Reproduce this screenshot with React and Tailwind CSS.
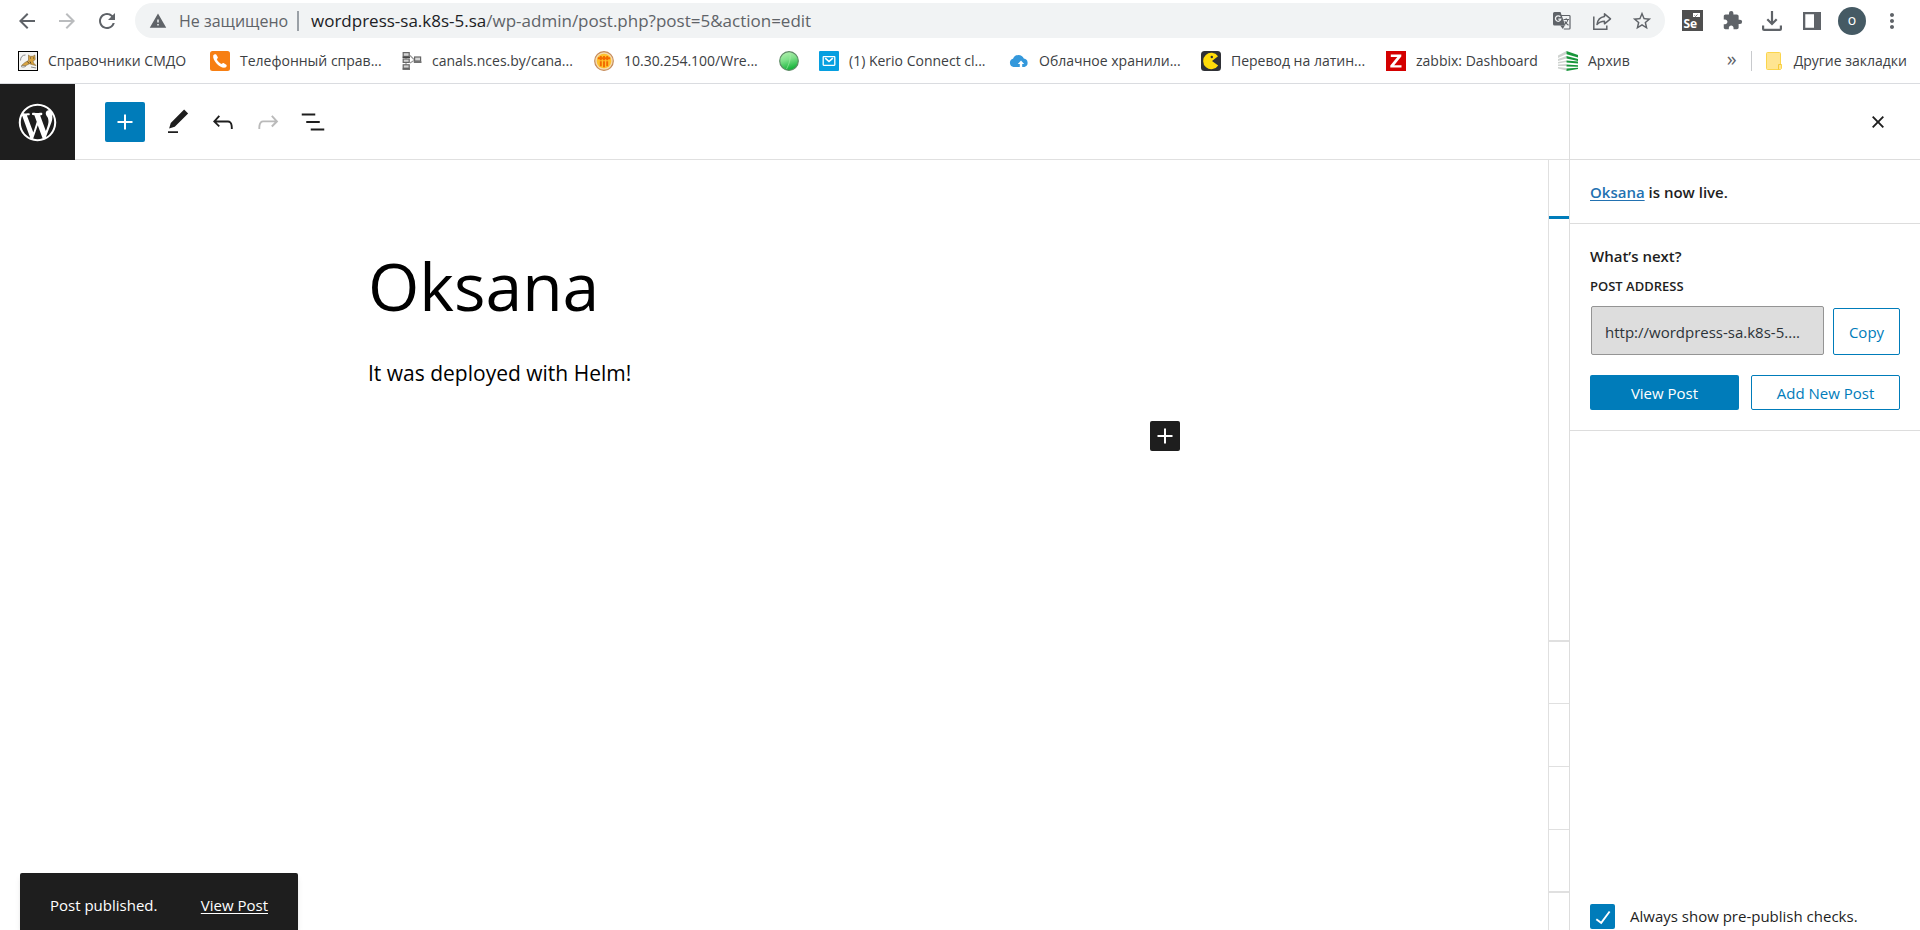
import React from "react";
import { MdArrowBack, MdArrowForward, MdRefresh, MdWarning, MdStarBorder, MdExtension, MdMoreVert } from "react-icons/md";

/* ---------- browser icons ---------- */

function TranslateIcon() {
  return (
    <svg width="20" height="20" viewBox="0 0 20 20" aria-hidden="true">
      <path d="M9 4.500h8.200c.5 0 .8.300.8.800v11.900c0 .5-.3.800-.8.800h-5.400" fill="none" stroke="#5f6368" strokeWidth="1.200" />
      <path d="M2.500 1h6l4.800 13.500H2.500A1.500 1.500 0 0 1 1 13V2.500A1.500 1.500 0 0 1 2.500 1z" fill="#5f6368" />
      <path d="M8.200 14.500h4.600L10.800 18z" fill="#5f6368" />
      <path d="M8.300 5.900A2.700 2.700 0 1 0 8.800 8.200H6.300" fill="none" stroke="#f1f3f4" strokeWidth="1.300" />
      <path d="M11.500 8.500h5.500M14.200 7.200v1.300M16 8.500c-.4 2-1.600 3.600-3.200 4.700M12.800 10.300c.8 1.500 2 2.700 3.700 3.900" fill="none" stroke="#5f6368" strokeWidth="1.100" />
    </svg>
  );
}

function ShareIcon() {
  return (
    <svg width="20" height="20" viewBox="0 0 20 20" fill="none" stroke="#5f6368" strokeWidth="1.500" aria-hidden="true">
      <path d="M1.800 5.500v12.700h13V14.500" />
      <path d="M12.500 2.800l6 5-6 5V10.200c-3.600 0-5.600 1-7.500 3.300.6-4.200 3-7.300 7.500-7.900z" strokeLinejoin="round" />
    </svg>
  );
}

function SeleniumIcon() {
  return (
    <svg width="21" height="21" viewBox="0 0 21 21" aria-hidden="true">
      <rect width="21" height="21" fill="#4f4f4f" />
      <path d="M11 3h7v4h-7z" fill="#fff" />
      <path d="M12.500 5.500l1 1 2-2" stroke="#777" fill="none" />
      <text x="1.500" y="18" fill="#fff" fontSize="12" fontWeight="700" fontFamily="Open Sans, sans-serif">Se</text>
    </svg>
  );
}

function DownloadIcon() {
  return (
    <svg width="20" height="20" viewBox="0 0 20 20" fill="none" stroke="#5f6368" strokeWidth="2.200" aria-hidden="true">
      <path d="M10 0v13M5.300 8.300L10 13l4.700-4.700M1.100 14.500v3.400c0 .6.400 1 1 1h15.800c.6 0 1-.4 1-1v-3.400" />
    </svg>
  );
}

function SidePanelIcon() {
  return (
    <svg width="18" height="18" viewBox="0 0 18 18" aria-hidden="true">
      <path d="M0 0h18v18H0zM2.300 2.300v13.400h8.700V2.300z" fill="#5f6368" fillRule="evenodd" />
    </svg>
  );
}

/* ---------- bookmark icons ---------- */

const fav = {
  cat: (
    <svg width="20" height="20" viewBox="0 0 20 20">
      <rect x=".5" y=".5" width="19" height="19" fill="#f4f4f2" stroke="#000" />
      <path d="M10.500 4l1.500 1.300h3L16.800 4l.4 4.500-2.200 1.800.5 1.700 2.500 2.500-3.500-.8-3-1-3.500 1.800H3.500L7 11.500l3.500-2z" fill="#d9a441" stroke="#7a6233" strokeWidth=".6" />
      <path d="M2.500 9.500c0-3.500 2-5.500 5-5.500M3 15.500c2 1 4 .5 5-.5M13 16l5 1" stroke="#8b8b8b" fill="none" />
      <path d="M12 7h1M15 7h1M9.500 10.500l1.500 2M12 10.500l1 2" stroke="#333" strokeWidth=".8" />
    </svg>
  ),
  phone: (
    <svg width="20" height="20" viewBox="0 0 20 20">
      <rect width="20" height="20" rx="2.500" fill="#f77f13" />
      <path d="M3.200 4.500C4 3.300 5.600 2.700 6.200 3.600l1.500 2.500c.4.7.1 1.400-.9 2.200.7 2 2.800 4 4.900 4.800.8-1 1.500-1.300 2.200-.9l2.400 1.500c.9.7.3 2.100-.9 2.900C10.500 18 2.300 9.800 3.200 4.500z" fill="#fff" />
    </svg>
  ),
  diagram: (
    <svg width="20" height="20" viewBox="0 0 20 20" fill="#d4d4d4" stroke="#666" strokeWidth="1.200">
      <path d="M4 6v9M8 4.500l4 4M8 12l4-2.500" fill="none" stroke="#999" />
      <rect x="1.200" y="1.600" width="6" height="3.800" /><rect x="1.200" y="8" width="6" height="3.400" />
      <rect x="1.200" y="13.800" width="6" height="3.400" /><rect x="12.600" y="6" width="6" height="4" />
      <path d="M.5 6.400h7.500M.5 18.200h7.500M11.800 11.200h7.700" stroke="#444" />
    </svg>
  ),
  basket: (
    <svg width="20" height="20" viewBox="0 0 20 20">
      <circle cx="10" cy="10" r="9.300" fill="#f6dcae" stroke="#c58a5a" strokeWidth="1.200" />
      <circle cx="10" cy="10" r="7.300" fill="#ffc12c" />
      <path d="M3.800 7.200h12.400M6.800 5v4.200M10 5v4.200M13.200 5v4.200M6.800 10.200v5M10 10.200v6M13.200 10.200v5" stroke="#f26a00" strokeWidth="1.900" />
    </svg>
  ),
  green: (
    <svg width="20" height="20" viewBox="0 0 20 20">
      <defs>
        <linearGradient id="ball" x1="0" y1="0" x2=".3" y2="1">
          <stop offset="0" stopColor="#b9f3b4" /><stop offset=".5" stopColor="#7fe08a" /><stop offset="1" stopColor="#19b53c" />
        </linearGradient>
      </defs>
      <circle cx="10" cy="10" r="9.300" fill="url(#ball)" stroke="#5f8a66" strokeWidth="1.200" />
      <path d="M11 1.500c1 6-1 12-3.500 16.500" stroke="#a9eeaa" strokeWidth=".6" fill="none" />
    </svg>
  ),
  mail: (
    <svg width="20" height="20" viewBox="0 0 20 20" fill="none" stroke="#fff" strokeWidth="1.300">
      <rect width="20" height="20" rx="1" fill="#069fe0" stroke="none" />
      <rect x="4.200" y="5.700" width="11.600" height="8.600" rx=".5" />
      <path d="M6.200 7.200L10 10.500l3.800-3.300" strokeWidth="1.600" />
    </svg>
  ),
  cloud: (
    <svg width="20" height="20" viewBox="0 0 20 20">
      <path d="M4.500 16A4.200 4.200 0 0 1 4 7.800 5.800 5.800 0 0 1 14.800 7.600 4.300 4.300 0 0 1 15.500 16z" fill="#3498db" />
      <path d="M10.800 16.500v-3.500H8.800l3.200-3.600 3.200 3.600h-2v3.500z" fill="#fff" />
    </svg>
  ),
  pacman: (
    <svg width="20" height="20" viewBox="0 0 20 20">
      <rect width="20" height="20" rx="3.500" fill="#2f3136" />
      <path d="M17 5.200A8.200 8.200 0 1 0 17.200 14.500L11 10z" fill="#ffdc0a" />
      <circle cx="10.800" cy="6" r="1.200" fill="#2f3136" />
    </svg>
  ),
  zabbix: (
    <svg width="20" height="20" viewBox="0 0 20 20">
      <rect width="20" height="20" fill="#d40000" />
      <path d="M4.800 3.600h10.500v2L8.200 14.200h7.300v2.400H4.300v-2.200l7-8.400H4.800z" fill="#fff" />
    </svg>
  ),
  archive: (
    <svg width="20" height="20" viewBox="0 0 20 20">
      <path d="M8.500 0v3L0 7V4.500zM8.500 5v2.500L0 10V8zM8.500 9.500v1.500L0 12.500V11zM8.500 13v2L0 15v-1.500zM8.500 17v2.500L0 17.500V16z" fill="#cfd3d0" />
      <path d="M8.500 0L20 4v2.500L8.500 3.300zM8.500 5L20 8v2L8.500 7.500zM8.500 9.500l11.500 1V12.500l-11.500-1zM8.500 13.500l11.500.8v1.500l-11.500-.3zM8.500 17.500l11.500-.7v1.200L8.500 20z" fill="#17963a" />
    </svg>
  ),
};

const bookmarks = [
  { icon: "cat", label: "Справочники СМДО", width: "w-48" },
  { icon: "phone", label: "Телефонный справ...", width: "w-48" },
  { icon: "diagram", label: "canals.nces.by/cana...", width: "w-48" },
  { icon: "basket", label: "10.30.254.100/Wre...", width: "w-[185px]" },
  { icon: "green", label: "", width: "w-10" },
  { icon: "mail", label: "(1) Kerio Connect cl...", width: "w-[190px]" },
  { icon: "cloud", label: "Облачное хранили...", width: "w-48" },
  { icon: "pacman", label: "Перевод на латин...", width: "w-[185px]" },
  { icon: "zabbix", label: "zabbix: Dashboard", width: "w-[172px]" },
  { icon: "archive", label: "Архив", width: "w-24" },
];

function BrowserBar() {
  const tool = "flex w-10 items-center justify-center";
  return (
    <header className="bg-white">
      <div className="flex h-10 items-center pl-[15px] pr-2 pt-px text-[#5f6368]">
        <nav className="flex gap-4 pr-4" aria-label="Навигация">
          <button type="button" aria-label="Назад"><MdArrowBack size={24} /></button>
          <button type="button" aria-label="Вперёд" className="text-[#babcbe]"><MdArrowForward size={24} /></button>
          <button type="button" aria-label="Обновить"><MdRefresh size={24} /></button>
        </nav>
        <div className="mr-[7px] flex h-[35px] flex-1 items-center rounded-full bg-[#f1f3f4] pl-[14px] pr-[3px] text-[17px]">
          <MdWarning size={18} />
          <span className="ml-3 w-[110px] whitespace-nowrap text-base">Не защищено</span>
          <span className="ml-2 mr-3 h-5 w-0.5 bg-[#9aa0a6]" />
          <span className="flex-1 whitespace-nowrap">
            <span className="text-[#202124]">wordpress-sa.k8s-5.sa</span>/wp-admin/post.php?post=5&amp;action=edit
          </span>
          <button type="button" aria-label="Перевести" className={tool}><TranslateIcon /></button>
          <button type="button" aria-label="Поделиться" className={tool}><ShareIcon /></button>
          <button type="button" aria-label="Добавить в закладки" className={tool}><MdStarBorder size={22} /></button>
        </div>
        <button type="button" aria-label="Selenium" className={tool}><SeleniumIcon /></button>
        <button type="button" aria-label="Расширения" className={tool}><MdExtension size={21} /></button>
        <button type="button" aria-label="Загрузки" className={tool}><DownloadIcon /></button>
        <button type="button" aria-label="Боковая панель" className={tool}><SidePanelIcon /></button>
        <button type="button" aria-label="Профиль" className={tool}>
          <span className="flex h-7 w-7 items-center justify-center rounded-full bg-[#455a64] pb-0.5 text-sm text-white">o</span>
        </button>
        <button type="button" aria-label="Меню" className={tool}><MdMoreVert size={24} /></button>
      </div>
      <div className="flex h-11 items-center border-b border-[#dadce0] pb-px pl-[18px] pr-[13px] text-sm text-[#3c4043]">
        {bookmarks.map((b) => (
          <a key={b.icon} href="#" aria-label={b.label || b.icon} className={`flex shrink-0 items-center gap-[10px] whitespace-nowrap ${b.width}`}>
            <span className="shrink-0" aria-hidden="true">{fav[b.icon]}</span>
            {b.label}
          </a>
        ))}
        <button type="button" className="ml-auto pb-1 text-xl leading-5 text-[#5f6368]" aria-label="Другие">»</button>
        <span className="mx-[14px] h-5 w-px bg-[#c8cacd]" />
        <a href="#" className="flex items-center gap-3 whitespace-nowrap">
          <svg width="16" height="18" viewBox="0 0 16 18" aria-hidden="true">
            <path d="M1.500.5h12a1 1 0 0 1 1 1V12l1 1v3.500l-1 1h-13a1 1 0 0 1-1-1v-15a1 1 0 0 1 1-1z" fill="#ffe591" stroke="#fbd54c" />
            <path d="M12.500 17.500V12.500h3" fill="none" stroke="#f5c938" />
          </svg>
          Другие закладки
        </a>
      </div>
    </header>
  );
}

/* ---------- editor ---------- */

function Glyph({ d, size = 30, viewBox = "0 0 24 24" }) {
  return (
    <svg width={size} height={size} viewBox={viewBox} fill="currentColor" className="shrink-0" aria-hidden="true"><path d={d} /></svg>
  );
}

const paths = {
  wordpress:
    "M20 10c0-5.51-4.49-10-10-10C4.48 0 0 4.49 0 10c0 5.52 4.48 10 10 10 5.51 0 10-4.48 10-10zM7.78 15.37L4.37 6.22c.55-.02 1.17-.08 1.17-.08.5-.06.44-1.13-.06-1.11 0 0-1.45.11-2.37.11-.18 0-.37 0-.58-.01C4.12 2.69 6.87 1.11 10 1.11c2.33 0 4.45.87 6.05 2.34-.68-.11-1.65.39-1.65 1.58 0 .74.45 1.36.9 2.1.35.61.55 1.36.55 2.46 0 1.49-1.4 5-1.4 5l-3.03-8.37c.54-.02.82-.17.82-.17.5-.05.44-1.25-.06-1.22 0 0-1.44.12-2.38.12-.87 0-2.33-.12-2.33-.12-.5-.03-.56 1.2-.06 1.22l.92.08 1.26 3.41zM17.41 10c.24-.64.74-1.87.43-4.25.7 1.29 1.05 2.71 1.05 4.25 0 3.29-1.73 6.24-4.4 7.78.97-2.59 1.94-5.2 2.92-7.78zM6.1 18.09C3.12 16.65 1.11 13.53 1.11 10c0-1.3.23-2.48.72-3.59C3.25 10.3 4.67 14.2 6.1 18.09zm4.03-6.63l2.58 6.98c-.86.29-1.76.45-2.71.45-.79 0-1.57-.11-2.29-.33.81-2.38 1.62-4.74 2.42-7.1z",
  plus: "M18 11.2h-5.2V6h-1.6v5.2H6v1.6h5.2V18h1.6v-5.2H18z",
  edit: "M20.1 5.1L16.9 2 6.2 12.7l-1.3 4.4 4.5-1.3L20.1 5.1zM4 20.8h8v-1.5H4v1.5z",
  undo: "M18.3 11.7c-.6-.6-1.4-.9-2.3-.9H6.7l2.9-3.3-1.1-1-4.5 5L8.5 16l1-1-2.7-2.7H16c.5 0 .9.2 1.3.5 1 1 1 3.4 1 4.5v.3h1.5v-.2c0-1.5 0-4.3-1.5-5.7z",
  redo: "M15.6 6.5l-1.1 1 2.9 3.3H8c-.9 0-1.7.3-2.3.9-1.4 1.5-1.4 4.2-1.4 5.6v.2h1.5v-.3c0-1.1 0-3.5 1-4.5.3-.3.7-.5 1.3-.5h9.2L14.5 15l1.1 1.1 4.6-4.6-4.6-5z",
  list: "M13.8 5.2H3v1.5h10.8V5.2zm-3.6 12v1.5H21v-1.5H10.2zm7.2-6H6.6v1.5h10.8v-1.5z",
  close:
    "M12 13.06l3.712 3.713 1.061-1.06L13.061 12l3.712-3.712-1.06-1.06L12 10.938 8.288 7.227l-1.061 1.06L10.939 12l-3.712 3.712 1.06 1.061L12 13.061z",
  check: "M16.7 7.1l-6.3 8.5-3.3-2.5-.9 1.2 4.5 3.4L17.9 8z",
};

function EditorHeader() {
  const tool = "flex w-[45px] items-center justify-center";
  return (
    <div className="flex h-[76px] text-[#1e1e1e]">
      <a href="#" aria-label="View Posts" className="flex w-[75px] items-center justify-center bg-[#1e1e1e] text-white">
        <Glyph d={paths.wordpress} size={45} viewBox="-2 -2 24 24" />
      </a>
      <div className="flex flex-1 items-center border-b border-[#e0e0e0] pl-[30px]">
        <button type="button" aria-label="Add block" className="mr-[10px] flex h-10 w-10 items-center justify-center rounded-xs bg-[#007cba] text-white">
          <Glyph d={paths.plus} />
        </button>
        <button type="button" aria-label="Tools" className={tool}><Glyph d={paths.edit} /></button>
        <button type="button" aria-label="Undo" className={tool}><Glyph d={paths.undo} /></button>
        <button type="button" aria-label="Redo" className={`${tool} text-[#bababa]`}><Glyph d={paths.redo} /></button>
        <button type="button" aria-label="List View" className={tool}><Glyph d={paths.list} /></button>
      </div>
    </div>
  );
}

function SettingsEdge() {
  return (
    <aside className="flex w-[21px] shrink-0 flex-col border-l border-[#e0e0e0]" aria-label="Settings">
      <div className="h-[59px] border-b-3 border-[#007cba]" />
      <div className="h-[423px] border-b-2 border-[#e0e0e0]" />
      <div className="h-[62px] border-b border-[#e0e0e0]" />
      <div className="h-[63px] border-b border-[#e0e0e0]" />
      <div className="h-[63px] border-b border-[#e0e0e0]" />
      <div className="h-[63px] border-b-2 border-[#e0e0e0]" />
    </aside>
  );
}

function PublishPanel() {
  const outline = "rounded-xs border border-[#007cba] bg-white text-[15px] text-[#007cba]";
  return (
    <aside className="flex w-[351px] shrink-0 flex-col border-l border-[#dddddd] text-base text-[#1e1e1e]" aria-label="Publish">
      <div className="flex h-[76px] items-center justify-end border-b border-[#dddddd] pr-[27px]">
        <button type="button" aria-label="Close panel"><Glyph d={paths.close} /></button>
      </div>
      <p className="h-16 border-b border-[#dddddd] px-5 pt-[21px] text-[15px] font-semibold">
        <a href="#" className="text-[#2271b1] underline underline-offset-2">Oksana</a> is now live.
      </p>
      <div className="border-b border-[#dddddd] p-5">
        <h2 className="text-[15px] font-semibold leading-6">What’s next?</h2>
        <label htmlFor="address" className="mt-2 block text-[13px] font-semibold uppercase leading-5">Post address</label>
        <div className="mt-[10px] flex items-end gap-[9px] pl-px">
          <input id="address" readOnly value="http://wordpress-sa.k8s-5...." className="h-[49px] min-w-0 flex-1 rounded-xs border border-[#949494] bg-[#dddddd] px-[13px] pt-0.5 text-[15px] text-[#2c3338]" />
          <button type="button" className={`h-[47px] w-[67px] pt-0.5 ${outline}`}>Copy</button>
        </div>
        <div className="mt-5 grid grid-cols-2 gap-3">
          <button type="button" className="h-[35px] rounded-xs bg-[#007cba] pt-0.5 text-[15px] text-white">View Post</button>
          <button type="button" className={`h-[35px] pt-0.5 ${outline}`}>Add New Post</button>
        </div>
      </div>
      <label className="mt-auto flex items-center gap-[15px] px-5 pb-px text-[15px]">
        <span className="relative flex h-[25px] w-[25px] text-white">
          <input type="checkbox" defaultChecked className="h-[25px] w-[25px] appearance-none rounded-xs bg-[#007cba]" />
          <span className="pointer-events-none absolute inset-0 flex items-center justify-center"><Glyph d={paths.check} /></span>
        </span>
        Always show pre-publish checks.
      </label>
    </aside>
  );
}

export default function App() {
  return (
    <div className="relative flex min-h-screen flex-col overflow-hidden bg-white font-['Open_Sans','Noto_Sans',sans-serif]">
      <BrowserBar />
      <div className="flex flex-1">
        <div className="flex flex-1 flex-col">
          <EditorHeader />
          <div className="flex flex-1">
            <main className="flex-1 text-black">
              <article className="mx-auto flex max-w-[812px] flex-col">
                <h1 className="mt-[77px] text-[66px] leading-[96px]">Oksana</h1>
                <p className="mt-[22px] text-[21px] leading-9">It was deployed with Helm!</p>
                <button type="button" aria-label="Add block" className="mt-[30px] flex h-[30px] w-[30px] items-center justify-center self-end rounded-xs bg-[#1e1e1e] text-white">
                  <Glyph d={paths.plus} />
                </button>
              </article>
            </main>
            <SettingsEdge />
          </div>
        </div>
        <PublishPanel />
      </div>
      <div role="status" className="absolute bottom-0 left-5 flex h-[57px] w-[278px] items-center justify-between rounded-t-xs bg-[#1e1e1e] px-[30px] pt-2 text-[15px] text-white shadow-md">
        <span>Post published.</span>
        <a href="#" className="underline underline-offset-2">View Post</a>
      </div>
    </div>
  );
}
